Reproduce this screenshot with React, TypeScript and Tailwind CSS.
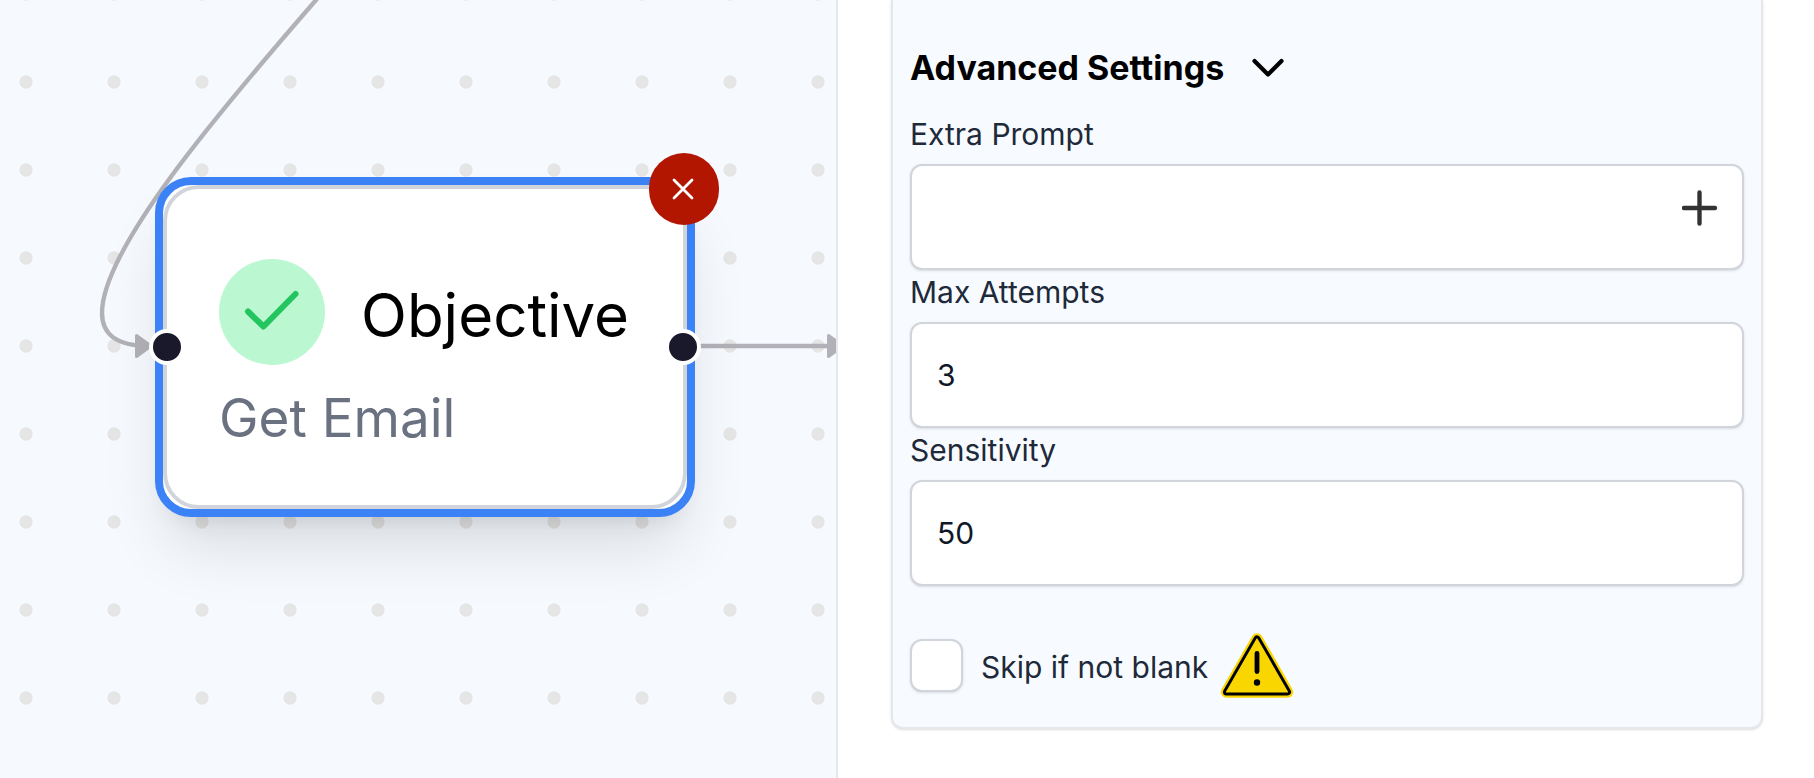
import { useState } from 'react';

interface TextFieldProps {
  id: string;
  label: string;
  value: string;
  onChange: (value: string) => void;
  action?: React.ReactNode;
}

function TextField({ id, label, value, onChange, action }: TextFieldProps) {
  return (
    <div>
      <label htmlFor={id} className="mb-2 block text-[30px] leading-[44px] text-gray-800">
        {label}
      </label>
      <div className="relative">
        <input
          id={id}
          type="text"
          value={value}
          onChange={(e) => onChange(e.target.value)}
          className="block h-[106px] w-full rounded-xl border-2 border-[#d1d5db] bg-white px-[25px] text-[30px] text-gray-900 shadow-sm outline-none"
        />
        {action}
      </div>
    </div>
  );
}

function Handle({ className }: { className: string }) {
  return <span className={`absolute size-9 rounded-full border-4 border-white bg-[#1a192b] ${className}`} />;
}

function ObjectiveNode() {
  return (
    <div className="absolute left-[155px] top-[177px] h-[340px] w-[540px] rounded-[36px] border-8 border-[#3b82f6] bg-white shadow-[0_40px_64px_-12px_rgba(0,0,0,0.12),0_16px_24px_-16px_rgba(0,0,0,0.12)]">
      <div className="flex h-full flex-col gap-5 rounded-[36px] border-4 border-[#d1d5db] px-[52px] pt-[70px]">
        <div className="flex items-end gap-9">
          <div className="flex size-[106px] shrink-0 items-center justify-center rounded-full bg-[#bbf7d0]">
            <svg width="56" height="56" viewBox="0 0 56 56" fill="none" aria-hidden="true">
              <path
                d="M4 27.500 19.500 42.500 51.500 10"
                stroke="#22c55e"
                strokeWidth="6"
                strokeLinecap="round"
                strokeLinejoin="round"
              />
            </svg>
          </div>
          <h3 className="text-[60px] leading-[100px] text-black">Objective</h3>
        </div>
        <p className="text-[53px] leading-[66px] text-gray-500">Get Email</p>
      </div>
      <Handle className="-left-[14px] top-[144px]" />
      <Handle className="-right-[14px] top-[144px]" />
      <button
        type="button"
        aria-label="Delete node"
        className="absolute -right-8 -top-8 flex h-[72px] w-[70px] items-center justify-center rounded-full bg-[#b31600]"
      >
        <svg width="24" height="24" viewBox="0 0 24 24" fill="none" aria-hidden="true">
          <path d="M2 3 20 21M20 3 2 21" stroke="#fff" strokeWidth="2.8" strokeLinecap="round" />
        </svg>
      </button>
    </div>
  );
}

function FlowCanvas() {
  return (
    <main className="relative overflow-hidden bg-[#f6faff]">
      <svg className="absolute inset-0 h-full w-full" aria-hidden="true">
        <defs>
          <pattern id="dots" x="-18" y="38" width="88" height="88" patternUnits="userSpaceOnUse">
            <circle cx="44" cy="44" r="6.7" fill="#e5e5e5" />
          </pattern>
        </defs>
        <rect width="100%" height="100%" fill="url(#dots)" />
        {/* Edges */}
        <g fill="none" stroke="#b1b1b7" strokeWidth="4.400">
          <path d="M324.500 -10 316 0C216 115 102 250 102 313C102 335 117 346 150 346" />
          <path d="M684 346H840" />
        </g>
        <g fill="#b1b1b7" stroke="#b1b1b7" strokeWidth="3" strokeLinejoin="round">
          <path d="M136.500 335.500 151 346 136.500 356.500Z" />
          <path d="M828.500 335.500 843 346 828.500 356.500Z" />
        </g>
      </svg>
      <ObjectiveNode />
    </main>
  );
}

function WarningIcon() {
  return (
    <svg width="74" height="66" viewBox="0 0 74 66" role="img" aria-label="Warning">
      <path d="M37 6 67.500 59H6.500Z" fill="#fad600" stroke="#fad600" strokeWidth="11.500" strokeLinejoin="round" />
      <path d="M37 6 67.500 59H6.500Z" fill="#fad600" stroke="#000" strokeWidth="7" strokeLinejoin="round" />
      <path d="M37 6 67.500 59H6.500Z" fill="#fad600" stroke="#fad600" strokeWidth="1.200" strokeLinejoin="round" />
      <path d="M37 20.500V38.500" stroke="#000" strokeWidth="4.800" strokeLinecap="round" />
      <circle cx="37" cy="49.500" r="3.200" />
    </svg>
  );
}

function SettingsPanel() {
  const [open, setOpen] = useState(true);
  const [extraPrompt, setExtraPrompt] = useState('');
  const [maxAttempts, setMaxAttempts] = useState('3');
  const [sensitivity, setSensitivity] = useState('50');
  const [skip, setSkip] = useState(false);

  return (
    <aside className="border-l-2 border-gray-200 bg-white pl-[53px] pr-[51px]">
      <section className="rounded-b-xl border-2 border-t-0 border-gray-200 bg-[#f7fbff] px-[17px] pb-[35px] pt-11 shadow-sm">
        <button
          type="button"
          aria-expanded={open}
          onClick={() => setOpen(!open)}
          className="mb-5 flex items-center gap-7 text-[34px] font-bold leading-[48px] text-black"
        >
          Advanced Settings
          <svg width="32" height="20" viewBox="0 0 32 20" fill="none" aria-hidden="true">
            <path
              d="M2.500 3 16 16.500 29.500 3"
              stroke="currentColor"
              strokeWidth="4.200"
              strokeLinecap="round"
              strokeLinejoin="round"
            />
          </svg>
        </button>

        {open && (
          <>
            <TextField
              id="extra-prompt"
              label="Extra Prompt"
              value={extraPrompt}
              onChange={setExtraPrompt}
              action={
                <button type="button" aria-label="Add prompt" className="absolute right-6 top-6 p-0.5">
                  <svg width="36" height="36" viewBox="0 0 36 36" fill="none" aria-hidden="true">
                    <path d="M17.500 2.500V33.500M2 18H33" stroke="#333" strokeWidth="4.400" strokeLinecap="round" />
                  </svg>
                </button>
              }
            />
            <TextField id="max-attempts" label="Max Attempts" value={maxAttempts} onChange={setMaxAttempts} />
            <TextField id="sensitivity" label="Sensitivity" value={sensitivity} onChange={setSensitivity} />

            <div className="mt-[53px] flex h-[53px] items-center">
              <input
                id="skip-if-not-blank"
                type="checkbox"
                checked={skip}
                onChange={(e) => setSkip(e.target.checked)}
                className="size-[53px] shrink-0 appearance-none rounded-xl border-2 border-[#d1d5db] bg-white shadow-sm checked:bg-blue-500"
              />
              <label htmlFor="skip-if-not-blank" className="ml-[18px] mr-3 pt-0.5 text-[30px] leading-[44px] text-gray-800">
                Skip if not blank
              </label>
              <WarningIcon />
            </div>
          </>
        )}
      </section>
    </aside>
  );
}

export default function App() {
  return (
    <div className="grid min-h-screen grid-cols-[836fr_978fr] font-['Inter',sans-serif]">
      <FlowCanvas />
      <SettingsPanel />
    </div>
  );
}
